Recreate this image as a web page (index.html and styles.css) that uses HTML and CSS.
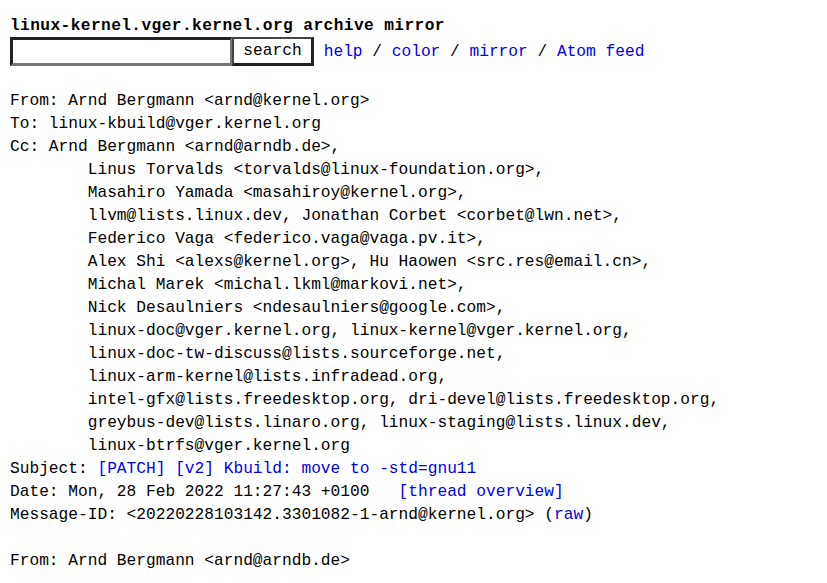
FILE: index.html
```html
<!DOCTYPE html>
<html>

<head>
    <meta charset="utf-8">
    <link rel="stylesheet" href="styles.css">
</head>

<body>
    <form class="top" action="#">
        <div class="title"><a href="#"><b>linux-kernel.vger.kernel.org archive mirror</b></a></div>
        <div class="bar">
            <input class="q" type="text" name="q"><input class="go" type="submit" value="search">
            <span class="nav">&nbsp;<a href="#">help</a> / <a href="#">color</a> / <a href="#">mirror</a> / <a href="#">Atom feed</a></span>
        </div>
    </form>
<pre class="msg">From: Arnd Bergmann &lt;arnd@kernel.org&gt;
To: linux-kbuild@vger.kernel.org
Cc: Arnd Bergmann &lt;arnd@arndb.de&gt;,
	Linus Torvalds &lt;torvalds@linux-foundation.org&gt;,
	Masahiro Yamada &lt;masahiroy@kernel.org&gt;,
	llvm@lists.linux.dev, Jonathan Corbet &lt;corbet@lwn.net&gt;,
	Federico Vaga &lt;federico.vaga@vaga.pv.it&gt;,
	Alex Shi &lt;alexs@kernel.org&gt;, Hu Haowen &lt;src.res@email.cn&gt;,
	Michal Marek &lt;michal.lkml@markovi.net&gt;,
	Nick Desaulniers &lt;ndesaulniers@google.com&gt;,
	linux-doc@vger.kernel.org, linux-kernel@vger.kernel.org,
	linux-doc-tw-discuss@lists.sourceforge.net,
	linux-arm-kernel@lists.infradead.org,
	intel-gfx@lists.freedesktop.org, dri-devel@lists.freedesktop.org,
	greybus-dev@lists.linaro.org, linux-staging@lists.linux.dev,
	linux-btrfs@vger.kernel.org
Subject: <a href="#">[PATCH] [v2] Kbuild: move to -std=gnu11</a>
Date: Mon, 28 Feb 2022 11:27:43 +0100	<a href="#">[thread overview]</a>
Message-ID: &lt;20220228103142.3301082-1-arnd@kernel.org&gt; (<a href="#">raw</a>)

From: Arnd Bergmann &lt;arnd@arndb.de&gt;
</pre>
</body>

</html>
```

FILE: styles.css
```css
body {
    margin: 0;
    padding: 16px 10px;
    background: #fff;
    color: #000;
    font-family: "Liberation Mono", monospace;
    font-size: 16.2px;
    line-height: 23px;
}

a {
    color: #0000ee;
    text-decoration: none;
}

.title {
    line-height: 20px;
}

.title a {
    color: #000;
}

.title b {
    letter-spacing: 0.4px;
}

.bar {
    display: flex;
    align-items: center;
    margin-top: 1px;
    height: 29px;
    white-space: pre;
}

.bar input {
    font-family: "Liberation Mono", monospace;
    font-size: 16.2px;
    margin: 0;
    height: 29px;
    box-sizing: border-box;
    background: #fff;
    color: #000;
    outline: none;
}

.q {
    width: 222px;
    border-style: solid;
    border-width: 3px 2px 3px 3px;
    border-color: #222 #777 #777 #222;
}

.go {
    width: 82px;
    padding: 0;
    border-style: solid;
    border-width: 2px 3px 3px 2px;
    border-color: #444 #222 #222 #444;
}

.nav {
    padding-top: 2px;
}

.msg {
    margin: 24px 0 0 0;
    font-family: "Liberation Mono", monospace;
    font-size: 16.2px;
    line-height: 23px;
    tab-size: 8;
}
```
